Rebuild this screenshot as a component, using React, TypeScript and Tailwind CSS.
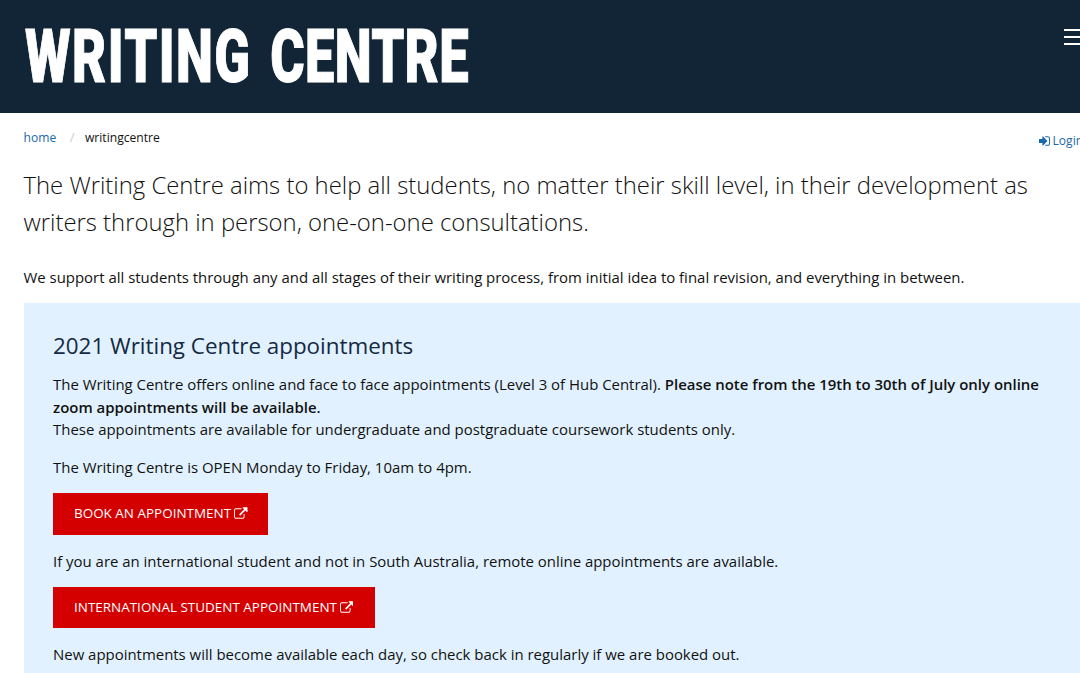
function SignInIcon() {
  return (
    <svg viewBox="192 256 1472 1280" className="h-[10px] w-[11px] shrink-0" fill="currentColor" aria-hidden="true">
      <path d="M1312 896q0 26-19 45l-544 544q-19 19-45 19t-45-19-19-45v-288h-448q-26 0-45-19t-19-45v-384q0-26 19-45t45-19h448v-288q0-26 19-45t45-19 45 19l544 544q19 19 19 45zm352-352v704q0 119-84.5 203.5t-203.5 84.5h-320q-13 0-22.5-9.5t-9.5-22.5q0-4-1-20t-.5-26.5 3-23.5 10-19.5 20.5-6.5h320q66 0 113-47t47-113v-704q0-66-47-113t-113-47h-312l-11.5-1-11.5-3-8-5.5-7-9-2-13.5q0-4-1-20t-.5-26.5 3-23.5 10-19.5 20.5-6.5h320q119 0 203.5 84.5t84.5 203.5z" />
    </svg>
  )
}

function ExternalLinkIcon() {
  return (
    <svg viewBox="0 0 1792 1536" className="mb-0.5 h-[12px] w-[13.5px] shrink-0" fill="currentColor" aria-hidden="true">
      <path d="M1408 928v320q0 119-84.5 203.5t-203.5 84.5h-832q-119 0-203.5-84.5t-84.5-203.5v-832q0-119 84.5-203.5t203.5-84.5h704q14 0 23 9t9 23v64q0 14-9 23t-23 9h-704q-66 0-113 47t-47 113v832q0 66 47 113t113 47h832q66 0 113-47t47-113v-320q0-14 9-23t23-9h64q14 0 23 9t9 23zm384-864v512q0 26-19 45t-45 19-45-19l-176-176-652 652q-10 10-23 10t-23-10l-114-114q-10-10-10-23t10-23l652-652-176-176q-19-19-19-45t19-45 45-19h512q26 0 45 19t19 45z" />
    </svg>
  )
}

function BookingButton({ label, className }: { label: string; className: string }) {
  return (
    <a
      href="#"
      className={`flex items-center gap-[3px] whitespace-nowrap bg-[#d40000] pl-[21px] text-[13.46px] text-white ${className}`}
    >
      <span>{label}</span>
      <ExternalLinkIcon />
    </a>
  )
}

function App() {
  return (
    <div className="h-[673px] w-[1080px] overflow-hidden bg-white font-['Open_Sans',sans-serif] text-[14.94px] leading-[22.5px] text-[#111]">
      <header className="flex h-[113px] justify-between bg-[#122536] pl-[25px]">
        <h1 className="origin-left scale-x-[0.7] whitespace-nowrap pt-4 font-['Roboto',sans-serif] text-[75px] font-black leading-[80px] text-white [-webkit-text-stroke:1px_white]">
          <span className="mr-[8px] tracking-[2px]">WRITING</span>{' '}
          <span className="tracking-[0.5px]">CENTRE</span>
        </h1>
        <button className="mt-[29px] flex h-4 w-4 flex-col justify-between" aria-label="Menu">
          <span className="h-0.5 w-full bg-white" />
          <span className="h-0.5 w-full bg-white" />
          <span className="h-0.5 w-full bg-white" />
        </button>
      </header>

      <main className="pl-[23.5px]">
        {/* Breadcrumb and login */}
        <div className="flex h-[53px] justify-between text-[12.1px]">
          <nav className="flex pt-[14px]">
            <a href="#" className="w-[46.5px] text-[#1c68a8]">home</a>
            <span className="w-[15px] text-[#ccc]">/</span>
            <span>writingcentre</span>
          </nav>
          <a href="#" className="mt-[17px] flex h-[22px] w-[41px] items-center gap-[2.5px] whitespace-nowrap text-[#1c68a8]">
            <SignInIcon />
            <span>Login</span>
          </a>
        </div>

        <p className="whitespace-nowrap text-[23.87px] font-light leading-[37px]">
          The Writing Centre aims to help all students, no matter their skill level, in their development as
          <br />
          writers through in person, one-on-one consultations.
        </p>
        <p className="mt-[26px] whitespace-nowrap">
          We support all students through any and all stages of their writing process, from initial idea to final revision, and everything in between.
        </p>

        <section className="mt-[14.5px] h-[400px] bg-[#e1f1ff] pl-[29.5px] pt-[27px]">
          <h2 className="text-[22.4px] leading-8 text-[#142a42]">2021 Writing Centre appointments</h2>
          <p className="mt-[11px] whitespace-nowrap">
            The Writing Centre offers online and face to face appointments (Level 3 of Hub Central).{' '}
            <strong className="font-semibold">
              Please note from the 19th to 30th of July only online
              <br />
              zoom appointments will be available.
            </strong>
            <br />
            These appointments are available for undergraduate and postgraduate coursework students only.
          </p>
          <p className="mt-[15px]">The Writing Centre is OPEN Monday to Friday, 10am to 4pm.</p>
          <BookingButton label="BOOK AN APPOINTMENT" className="mt-[15px] h-[42px] w-[215px] pb-px" />
          <p className="mt-[15px]">
            If you are an international student and not in South Australia, remote online appointments are available.
          </p>
          <BookingButton label="INTERNATIONAL STUDENT APPOINTMENT" className="mt-[14.5px] h-[41px] w-[322px]" />
          <p className="mt-[15px]">
            New appointments will become available each day, so check back in regularly if we are booked out.
          </p>
        </section>
      </main>
    </div>
  )
}

export default App
